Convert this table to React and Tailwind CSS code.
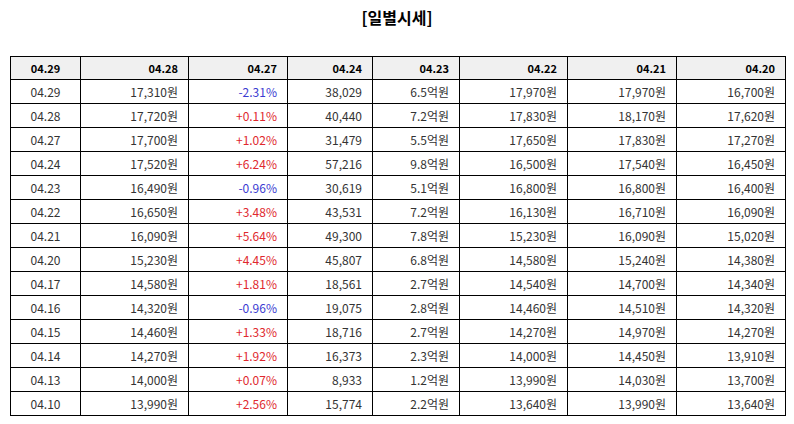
const headers = ['04.29', '04.28', '04.27', '04.24', '04.23', '04.22', '04.21', '04.20'];

const rows = [
  ['04.29', '17,310원', '-2.31%', '38,029', '6.5억원', '17,970원', '17,970원', '16,700원'],
  ['04.28', '17,720원', '+0.11%', '40,440', '7.2억원', '17,830원', '18,170원', '17,620원'],
  ['04.27', '17,700원', '+1.02%', '31,479', '5.5억원', '17,650원', '17,830원', '17,270원'],
  ['04.24', '17,520원', '+6.24%', '57,216', '9.8억원', '16,500원', '17,540원', '16,450원'],
  ['04.23', '16,490원', '-0.96%', '30,619', '5.1억원', '16,800원', '16,800원', '16,400원'],
  ['04.22', '16,650원', '+3.48%', '43,531', '7.2억원', '16,130원', '16,710원', '16,090원'],
  ['04.21', '16,090원', '+5.64%', '49,300', '7.8억원', '15,230원', '16,090원', '15,020원'],
  ['04.20', '15,230원', '+4.45%', '45,807', '6.8억원', '14,580원', '15,240원', '14,380원'],
  ['04.17', '14,580원', '+1.81%', '18,561', '2.7억원', '14,540원', '14,700원', '14,340원'],
  ['04.16', '14,320원', '-0.96%', '19,075', '2.8억원', '14,460원', '14,510원', '14,320원'],
  ['04.15', '14,460원', '+1.33%', '18,716', '2.7억원', '14,270원', '14,970원', '14,270원'],
  ['04.14', '14,270원', '+1.92%', '16,373', '2.3억원', '14,000원', '14,450원', '13,910원'],
  ['04.13', '14,000원', '+0.07%', '8,933', '1.2억원', '13,990원', '14,030원', '13,700원'],
  ['04.10', '13,990원', '+2.56%', '15,774', '2.2억원', '13,640원', '13,990원', '13,640원'],
];

const widths = ['w-[70px]', 'w-[108px]', 'w-[99px]', 'w-[85px]', 'w-[87px]', 'w-[108px]', 'w-[109px]', 'w-[109px]'];

function rateColor(v) {
  return v.startsWith('-') ? 'text-[#3b3bd1]' : 'text-[#e0282e]';
}

export default function App() {
  return (
    <div className="w-[794px] h-[424px] bg-white font-['Noto_Sans_CJK_KR','Noto_Sans',sans-serif] text-[#333]">
      {/* Title */}
      <h1 className="pt-[5px] h-[56px] text-center text-[16px] font-bold text-black leading-[24px]">[일별시세]</h1>

      {/* Daily price table */}
      <table className="ml-[10px] w-[775px] table-fixed border-collapse">
        <colgroup>
          {widths.map((w, i) => (
            <col key={i} className={w} />
          ))}
        </colgroup>
        <thead>
          <tr className="h-[23px] bg-[#f0f0f0] text-[11px]">
            {headers.map((h, i) => (
              <th
                key={i}
                className={`border border-black font-bold text-black px-[10px] ${i === 0 ? 'text-center' : 'text-right'}`}
              >
                {h}
              </th>
            ))}
          </tr>
        </thead>
        <tbody>
          {rows.map((r, ri) => (
            <tr key={ri} className="h-[24px] text-[12px]">
              {r.map((c, ci) => (
                <td
                  key={ci}
                  className={`border border-black px-[10px] leading-none ${ci === 0 ? 'text-center' : 'text-right'} ${ci === 2 ? rateColor(c) : ''}`}
                >
                  {c}
                </td>
              ))}
            </tr>
          ))}
        </tbody>
      </table>
    </div>
  );
}
